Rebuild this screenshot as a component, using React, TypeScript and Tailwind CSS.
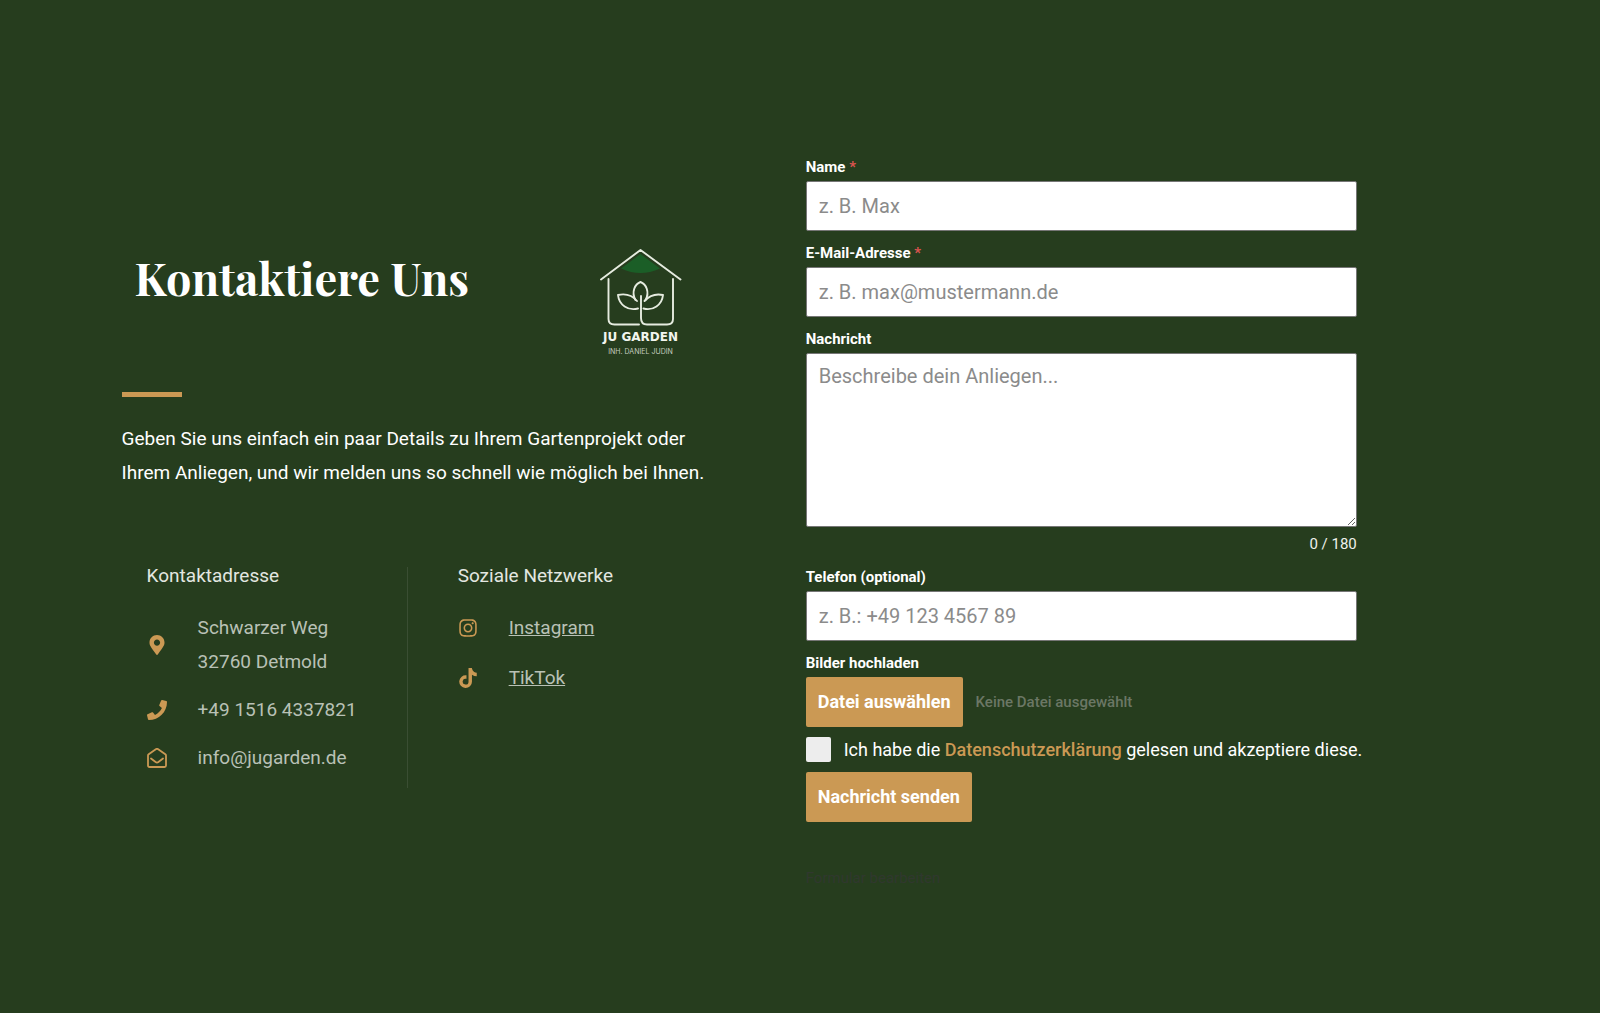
import React from "react";
import { FaInstagram, FaTiktok, FaPhone, FaMapMarkerAlt } from "react-icons/fa";

const labelClass = "block text-[15px] leading-6 font-bold text-white";
const inputClass =
  "mt-0.5 block h-[50px] w-full rounded-xs border border-[#767676] bg-white px-3 text-[20px] text-[#333] placeholder:text-[#8b8b8b]";

function Logo() {
  return (
    <svg viewBox="0 0 120 140" className="h-[140px] w-[120px] shrink-0" role="img" aria-label="JU Garden, Inh. Daniel Judin">
      <path d="M41 38.500L60.500 24L80 38.500Q70 43 60.500 43Q51 43 41 38.500Z" fill="#1b5e27" />
      <g fill="none" stroke="#e6ece0" strokeWidth="1.900" strokeLinecap="round" strokeLinejoin="round">
        <path d="M21 49.500L60.500 20L100.500 49.500" />
        <path d="M28.500 49V89Q28.500 94.500 34.500 94.500H59" />
        <path d="M93 49V89Q93 94.500 87 94.500H67Q61 94.500 61 88V66" />
        <path d="M55.500 70C51 62 55 54 60.500 52C66 54 70 62 65.500 70" />
        <path d="M57 71C52 65 45 63.500 38 65C39 75 48 81 58 78.500" />
        <path d="M64.500 71C70 65 76 63.500 83 65C82 75 73 81 63.500 78.500" />
      </g>
      <text x="60.500" y="111" textAnchor="middle" fill="#f2f5ee" fontSize="12" fontWeight="700" fontFamily="DejaVu Sans, sans-serif">JU GARDEN</text>
      <text x="60.500" y="123.500" textAnchor="middle" fill="#c3ccbf" fontSize="7" fontFamily="Inter, sans-serif">INH. DANIEL JUDIN</text>
    </svg>
  );
}

function OpenEnvelope() {
  return (
    <svg viewBox="0 0 20 20" className="size-5" fill="none" stroke="currentColor" strokeWidth="1.800" strokeLinejoin="round" aria-hidden="true">
      <path d="M1 7.500Q1 6.800 1.700 6.300L8.800 1.200Q10 .4 11.200 1.200L18.300 6.300Q19 6.800 19 7.500V17.500Q19 19 17.500 19H2.500Q1 19 1 17.500Z" />
      <path d="M4 10.500L8.600 14Q10 15 11.400 14L16 10.500" strokeLinecap="round" />
    </svg>
  );
}

function Row({ icon, children }: { icon: React.ReactNode; children: React.ReactNode }) {
  return (
    <li className="flex items-center gap-[31px]">
      <span className="flex w-5 shrink-0 justify-center text-[#cb9954]">{icon}</span>
      <span>{children}</span>
    </li>
  );
}

export default function App() {
  return (
    <main className="grid min-h-screen grid-cols-[minmax(0,598fr)_minmax(0,551fr)] items-start gap-[86px] bg-[#263d1e] pt-[155px] pr-[15.2%] pb-24 pl-[7.600%] font-['Roboto',sans-serif] text-[19px] leading-[34px]">
      <section className="pt-[75px]">
        <div className="flex items-start justify-between pr-5 pl-[13px]">
          <h1 className="pt-[17px] font-['Playfair_Display','Liberation_Serif',serif] text-[45px] leading-[60px] font-bold whitespace-nowrap text-white">
            Kontaktiere Uns
          </h1>
          <Logo />
        </div>
        <div className="mt-[22px] h-[5px] w-[60px] bg-[#cb9954]" />
        <p className="mt-[25px] text-white">
          Geben Sie uns einfach ein paar Details zu Ihrem Gartenprojekt oder Ihrem Anliegen, und wir melden uns so
          schnell wie möglich bei Ihnen.
        </p>
        <div className="mt-[77px] grid grid-cols-[286fr_312fr]">
          <div className="h-[221px] border-r border-[#3a4e33] pl-[25px]">
            <h2 className="-mt-2 text-[#e3e7e1]">Kontaktadresse</h2>
            <ul className="mt-[18px] flex flex-col gap-3.5 text-[#b9c1b6]">
              <Row icon={<FaMapMarkerAlt className="size-5" />}>
                Schwarzer Weg
                <br />
                32760 Detmold
              </Row>
              <Row icon={<FaPhone className="size-5" />}>+49 1516 4337821</Row>
              <Row icon={<OpenEnvelope />}>info@jugarden.de</Row>
            </ul>
          </div>
          <div className="pl-[50px]">
            <h2 className="-mt-2 text-[#e3e7e1]">Soziale Netzwerke</h2>
            <ul className="mt-[18px] flex flex-col gap-4 text-[#b9c1b6]">
              <Row icon={<FaInstagram className="size-5" />}>
                <a href="#instagram" className="underline">Instagram</a>
              </Row>
              <Row icon={<FaTiktok className="size-5" />}>
                <a href="#tiktok" className="underline">TikTok</a>
              </Row>
            </ul>
          </div>
        </div>
      </section>

      <form className="flex flex-col gap-2.5" onSubmit={(e) => e.preventDefault()}>
        <div>
          <label htmlFor="name" className={labelClass}>
            Name <span className="text-[#d9534f]">*</span>
          </label>
          <input id="name" type="text" placeholder="z. B. Max" className={inputClass} />
        </div>
        <div>
          <label htmlFor="email" className={labelClass}>
            E-Mail-Adresse <span className="text-[#d9534f]">*</span>
          </label>
          <input id="email" type="email" placeholder="z. B. max@mustermann.de" className={inputClass} />
        </div>
        <div>
          <label htmlFor="message" className={labelClass}>Nachricht</label>
          <textarea
            id="message"
            maxLength={180}
            placeholder="Beschreibe dein Anliegen..."
            className="mt-0.5 block h-[174px] w-full resize rounded-xs border border-[#767676] bg-white px-3 pt-[7px] text-[20px] leading-[30px] text-[#333] placeholder:text-[#8b8b8b]"
          />
          <div className="mt-1.5 text-right text-[15px] leading-[22px] text-[#eef1ec]">0 / 180</div>
        </div>
        <div>
          <label htmlFor="phone" className={labelClass}>Telefon (optional)</label>
          <input id="phone" type="tel" placeholder="z. B.: +49 123 4567 89" className={inputClass} />
        </div>
        <div>
          <label htmlFor="upload" className={labelClass}>Bilder hochladen</label>
          <div className="mt-0.5 flex items-center gap-[13px]">
            <button id="upload" type="button" className="h-[50px] rounded-xs bg-[#cb9954] px-3 text-[18px] font-bold text-white">
              Datei auswählen
            </button>
            <span className="text-[15px] font-medium text-[#6b7765]">Keine Datei ausgewählt</span>
          </div>
        </div>
        <div className="flex items-center gap-[13px]">
          <input id="privacy" type="checkbox" className="size-[25px] shrink-0 appearance-none rounded-xs bg-[#ededed] checked:bg-[#cb9954]" />
          <label htmlFor="privacy" className="text-[18px] leading-[25px] whitespace-nowrap text-white">
            Ich habe die <a href="#datenschutz" className="font-medium text-[#cb9954]">Datenschutzerklärung</a> gelesen und akzeptiere diese.
          </label>
        </div>
        <button type="submit" className="h-[50px] self-start rounded-xs bg-[#cb9954] px-3 text-[18px] font-bold text-white">
          Nachricht senden
        </button>
        <a href="#bearbeiten" className="mt-[34px] self-start text-[15px] leading-6 text-[#30382e]">Formular bearbeiten</a>
      </form>
    </main>
  );
}
